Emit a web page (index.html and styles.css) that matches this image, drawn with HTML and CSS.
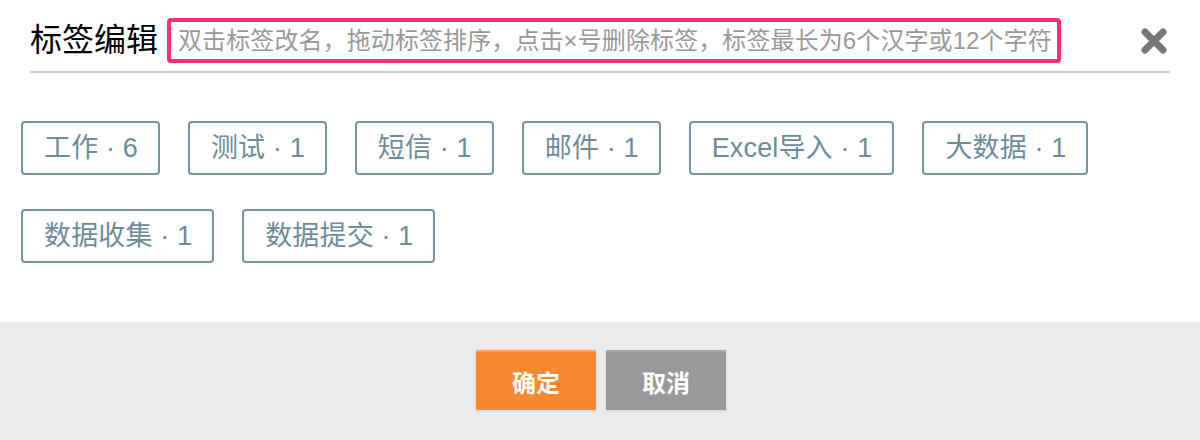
FILE: index.html
```html
<!DOCTYPE html>
<html lang="zh-CN">
<head>
<meta charset="utf-8">
<title>标签编辑</title>
<link rel="stylesheet" href="styles.css">
</head>
<body>
<div class="dialog">
  <div class="content">
    <div class="header">
      <h1 class="title">标签编辑</h1>
      <div class="hint">双击标签改名，拖动标签排序，点击×号删除标签，标签最长为6个汉字或12个字符</div>
      <div class="spacer"></div>
      <button class="close" aria-label="关闭">
        <svg width="26" height="26" viewBox="0 0 26 26">
          <path d="M4 4 L22 22 M22 4 L4 22" stroke="#777" stroke-width="7" stroke-linecap="round"/>
        </svg>
      </button>
    </div>
    <div class="tags">
      <span class="tag">工作 · 6</span>
      <span class="tag">测试 · 1</span>
      <span class="tag">短信 · 1</span>
      <span class="tag">邮件 · 1</span>
      <span class="tag">Excel导入 · 1</span>
      <span class="tag">大数据 · 1</span>
      <span class="tag">数据收集 · 1</span>
      <span class="tag">数据提交 · 1</span>
    </div>
  </div>
  <div class="footer">
    <button class="btn btn-ok">确定</button>
    <button class="btn btn-cancel">取消</button>
  </div>
</div>
</body>
</html>
```
FILE: styles.css
```css
* { box-sizing: border-box; }
html, body { margin: 0; padding: 0; background: #fff; }
body {
  font-family: "Liberation Sans", "Noto Sans CJK SC", sans-serif;
}
.dialog {
  height: 440px;
  display: flex;
  flex-direction: column;
}
.content { flex: 1; }
.header {
  margin: 0 30px;
  padding: 18px 0 8px;
  border-bottom: 2px solid #cccccc;
  display: flex;
  align-items: center;
}
.title {
  margin: 0;
  font-size: 32px;
  font-weight: normal;
  color: #000;
  line-height: 45px;
  white-space: nowrap;
}
.hint {
  margin-left: 9px;
  height: 45px;
  width: 894px;
  border: 4px solid #ff2d6d;
  border-radius: 4px;
  padding: 0 0 0 7px;
  font-size: 24px;
  letter-spacing: 0.1px;
  line-height: 37px;
  color: #999999;
  white-space: nowrap;
  overflow: hidden;
}
.spacer { flex: 1; }
.close {
  border: 0;
  background: none;
  padding: 0;
  margin-right: 3px;
  width: 26px;
  height: 26px;
  display: flex;
}
.tags {
  padding: 48px 20px 0 21px;
  display: flex;
  flex-wrap: wrap;
  column-gap: 28px;
  row-gap: 34px;
}
.tag {
  display: inline-block;
  height: 54px;
  border: 2px solid #7593a0;
  border-radius: 4px;
  padding: 0 20px 0 21px;
  font-size: 27px;
  letter-spacing: 0.15px;
  line-height: 50px;
  color: #6d8c99;
  white-space: nowrap;
}
.footer {
  height: 118px;
  background: #ebebeb;
  display: flex;
  justify-content: center;
  align-items: flex-start;
  gap: 10px;
  padding: 28px 0 0 2px;
}
.btn {
  width: 120px;
  height: 60px;
  border: 0;
  font-family: "Liberation Sans", "Noto Sans CJK SC", sans-serif;
  font-size: 24px;
  font-weight: bold;
  color: #fff;
  box-shadow: 0 1px 3px rgba(0,0,0,0.12);
}
.btn-ok {
  background: #f68830;
  border-top: 2px solid #f8a060;
}
.btn-cancel {
  background: #999999;
  border-top: 2px solid #a8a8a8;
}
```
